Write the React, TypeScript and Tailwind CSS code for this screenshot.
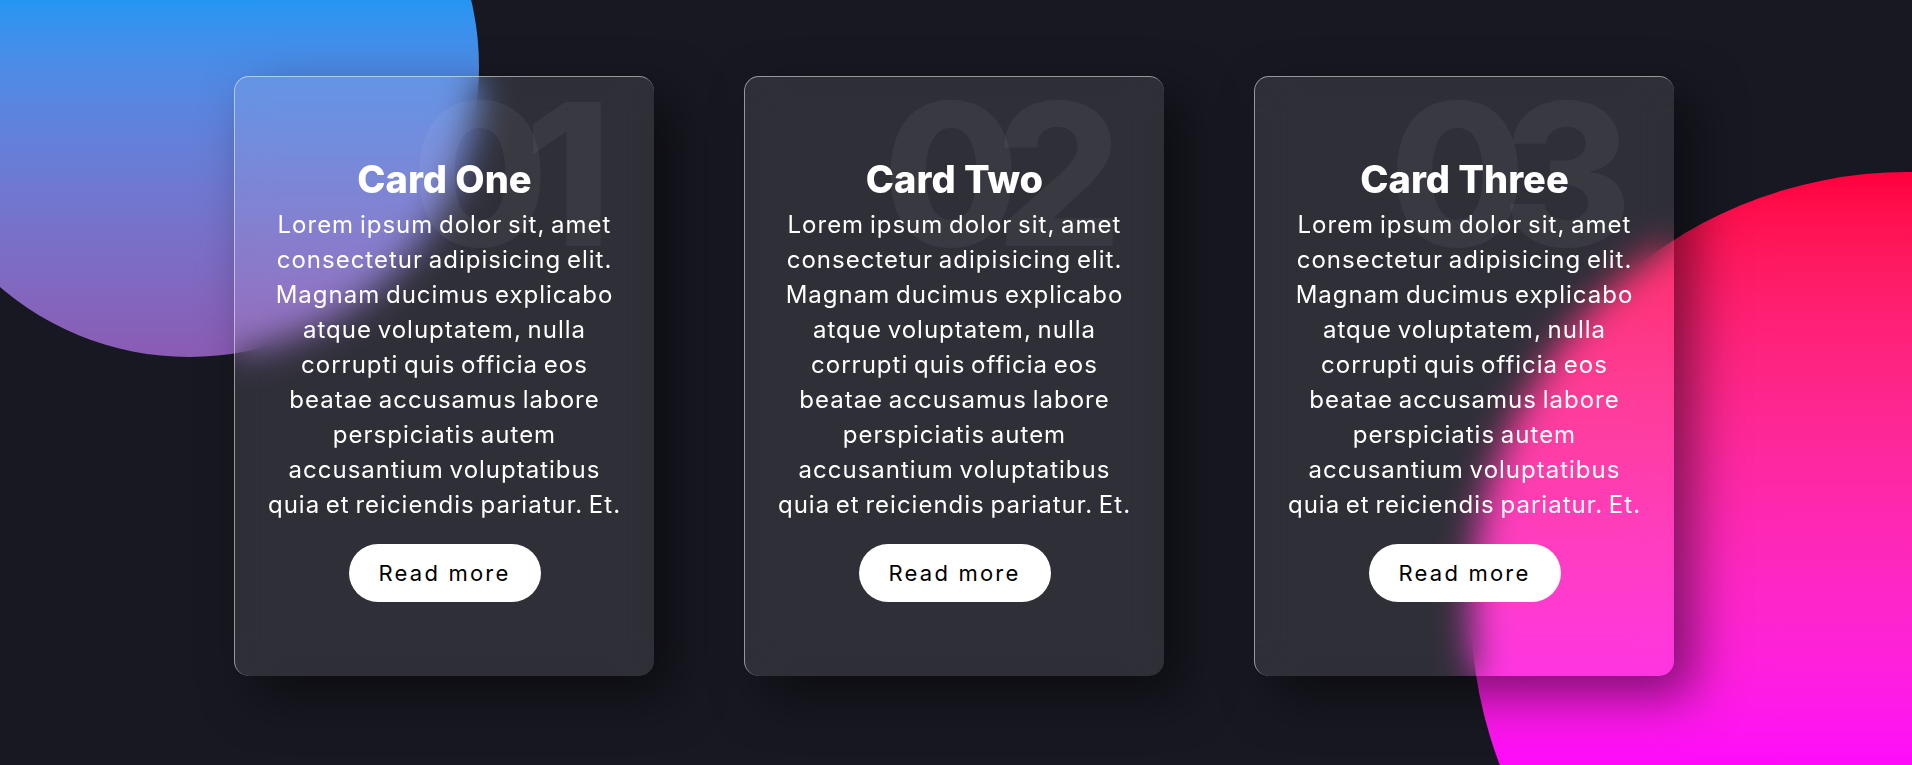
import React from "react";

const LINES = [
  "Lorem ipsum dolor sit, amet",
  "consectetur adipisicing elit.",
  "Magnam ducimus explicabo",
  "atque voluptatem, nulla",
  "corrupti quis officia eos",
  "beatae accusamus labore",
  "perspiciatis autem",
  "accusantium voluptatibus",
  "quia et reiciendis pariatur. Et.",
];

const CARDS = [
  { num: "01", title: "Card One" },
  { num: "02", title: "Card Two" },
  { num: "03", title: "Card Three" },
];

function Card({ num, title }: { num: string; title: string }) {
  return (
    <div className="relative z-10 flex h-[600px] w-[420px] flex-col items-center overflow-hidden rounded-[15px] border-l border-t border-white/50 bg-white/10 pt-[80px] shadow-[20px_20px_50px_rgba(0,0,0,0.5)] backdrop-blur-[18px]">
      <div className="pointer-events-none absolute right-[66px] top-[-2px] select-none text-[198px] font-extrabold leading-none tracking-[-24px] text-white/5">
        {num}
      </div>
      <h2 className="relative text-[38px] font-extrabold leading-[44px] tracking-[0px] text-white">
        {title}
      </h2>
      <p className="relative mt-[6px] text-center text-[24px] font-normal leading-[35px] tracking-[1px] [word-spacing:-2px] text-white">
        {LINES.map((l) => (
          <span key={l} className="block whitespace-nowrap">
            {l}
          </span>
        ))}
      </p>
      <button className="relative mt-[22px] flex h-[58px] w-[192px] items-center justify-center rounded-full bg-white text-[22px] font-normal tracking-[2.2px] text-black">
        Read more
      </button>
    </div>
  );
}

export default function App() {
  return (
    <div
      className="relative h-[765px] w-full overflow-hidden bg-[#181822]"
      style={{ fontFamily: "Inter, 'Noto Sans', sans-serif" }}
    >
      <div className="absolute left-[-101px] top-[-223px] h-[580px] w-[580px] rounded-full bg-gradient-to-b from-[#2196f3] from-[38%] to-[#8b5bb4]" />
      <div className="absolute left-[1471px] top-[172px] h-[874px] w-[874px] rounded-full bg-gradient-to-b from-[#ff003c] to-[#ff00ff] to-[70%]" />
      <div className="relative flex justify-center gap-[90px] pr-[4px] pt-[76px]">
        {CARDS.map((c) => (
          <Card key={c.num} num={c.num} title={c.title} />
        ))}
      </div>
    </div>
  );
}
